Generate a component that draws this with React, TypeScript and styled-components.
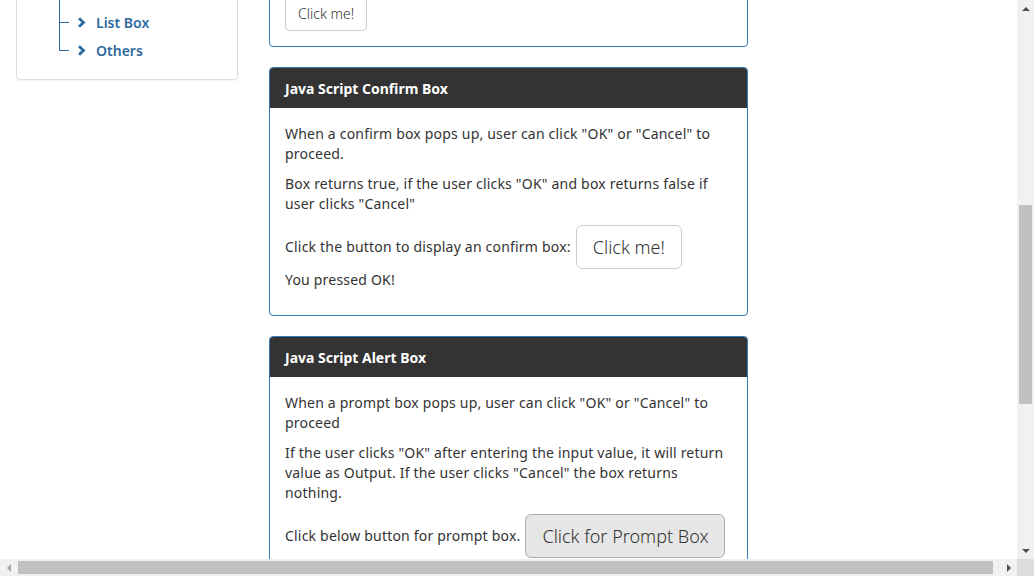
import styled, { createGlobalStyle } from "styled-components";

const GlobalStyle = createGlobalStyle`
  html, body {
    margin: 0;
    padding: 0;
    overflow: hidden;
  }
  body {
    font-family: "Noto Sans", "DejaVu Sans", sans-serif;
    font-size: 14px;
    color: #333;
    background: #fff;
  }
`;

const Frame = styled.div`
  width: 1034px;
  height: 576px;
  display: grid;
  grid-template-columns: 1017px 17px;
  grid-template-rows: 559px 17px;
`;

const Viewport = styled.div`
  overflow: hidden;
  background: #fff;
`;

/* page is scrolled: content starts above the visible area */
const Page = styled.div<{ scroll: number }>`
  margin-top: ${({ scroll }) => -scroll}px;
  display: flex;
  align-items: flex-start;
  padding-left: 16px;
  gap: 31px;
`;

const Sidebar = styled.div`
  width: 222px;
  box-sizing: border-box;
  border: 1px solid #ddd;
  border-radius: 4px;
  box-shadow: 0 1px 1px rgba(0, 0, 0, 0.05);
  padding: 26px 0 15px 42px;
`;

const Tree = styled.ul`
  list-style: none;
  margin: 0;
  padding: 0;
`;

const TreeItem = styled.li<{ first?: boolean; last?: boolean }>`
  position: relative;
  height: 28px;
  display: flex;
  align-items: center;
  padding-left: 18px;
  font-weight: 600;
  color: #2f6a9f;

  &::before {
    content: "";
    position: absolute;
    left: 0;
    top: ${({ first }) => (first ? "-30px" : "0")};
    height: ${({ first, last }) => (last ? 14 : 28) + (first ? 30 : 0)}px;
    border-left: 1px solid #2f6a9f;
  }
  &::after {
    content: "";
    position: absolute;
    left: 0;
    top: 14px;
    width: 10px;
    border-top: 1px solid #2f6a9f;
  }
`;

const Chevron = styled.svg`
  width: 9px;
  height: 11px;
  margin-right: 10px;
  flex-shrink: 0;
`;

const Main = styled.div`
  width: 479px;
  display: flex;
  flex-direction: column;
  gap: 20px;
`;

const Card = styled.div`
  border: 1px solid #337ab7;
  border-radius: 4px;
  overflow: hidden;
  background: #fff;
`;

const CardHeader = styled.div`
  background: #333;
  color: #fff;
  font-weight: 700;
  height: 40px;
  padding: 0 15px;
  display: flex;
  align-items: center;
`;

const CardBody = styled.div<{ top?: number }>`
  padding: ${({ top }) => top ?? 16}px 15px 15px;
  letter-spacing: 0.2px;
`;

const Para = styled.p`
  margin: 0 0 10px;
  line-height: 20px;
`;

const ButtonRow = styled.div`
  display: flex;
  align-items: center;
  gap: 5px;
  min-height: 46px;
  line-height: 20px;
`;

const Button = styled.button<{ size?: "sm" | "lg"; pressed?: boolean }>`
  font-family: inherit;
  font-weight: 300;
  color: #333;
  cursor: pointer;
  border: 1px solid ${({ pressed }) => (pressed ? "#adadad" : "#ccc")};
  background: ${({ pressed }) => (pressed ? "#e6e6e6" : "#fff")};
  border-radius: ${({ size }) => (size === "lg" ? "6px" : "4px")};
  font-size: ${({ size }) => (size === "lg" ? "18px" : "14px")};
  line-height: ${({ size }) => (size === "lg" ? "24px" : "20px")};
  padding: ${({ size }) => (size === "lg" ? "9px 16px" : "6px 12px")};
`;

const Result = styled.p`
  margin: 0 0 10px;
  line-height: 20px;
`;

/* browser scrollbars */
const VBar = styled.div`
  background: #f1f1f1;
  display: flex;
  flex-direction: column;
`;

const HBar = styled.div`
  background: #f1f1f1;
  display: flex;
  align-items: center;
`;

const Corner = styled.div`
  background: #dcdcdc;
`;

const ArrowBox = styled.div`
  width: 17px;
  height: 17px;
  flex-shrink: 0;
  display: flex;
  align-items: center;
  justify-content: center;
`;

const Arrow = styled.div<{ dir: "up" | "down" | "left" | "right" }>`
  width: 0;
  height: 0;
  border: 4px solid transparent;
  ${({ dir }) =>
    dir === "up"
      ? "border-bottom-color: #505050; border-top-width: 0;"
      : dir === "down"
      ? "border-top-color: #505050; border-bottom-width: 0;"
      : dir === "left"
      ? "border-right-color: #a3a3a3; border-left-width: 0;"
      : "border-left-color: #505050; border-right-width: 0;"}
`;

const VTrack = styled.div`
  flex: 1;
  display: flex;
  justify-content: center;
`;

const VThumb = styled.div<{ offset: number; size: number }>`
  width: 13px;
  margin-top: ${({ offset }) => offset}px;
  height: ${({ size }) => size}px;
  background: #c1c1c1;
`;

const HTrack = styled.div`
  flex: 1;
  height: 17px;
  display: flex;
  align-items: center;
`;

const HThumb = styled.div<{ offset: number; size: number }>`
  height: 13px;
  margin-left: ${({ offset }) => offset}px;
  width: ${({ size }) => size}px;
  background: #c1c1c1;
`;

const menu = ["List Box", "Others"];

const ChevronIcon = () => (
  <Chevron viewBox="0 0 9 11">
    <path d="M2 1.2 L6.5 5.5 L2 9.8" fill="none" stroke="#2f6a9f" strokeWidth="2.8" />
  </Chevron>
);

export default function App() {
  return (
    <>
      <GlobalStyle />
      <Frame>
        <Viewport>
          <Page scroll={19}>
            <Sidebar>
              <Tree>
                {menu.map((m, i) => (
                  <TreeItem key={m} first={i === 0} last={i === menu.length - 1}>
                    <ChevronIcon />
                    {m}
                  </TreeItem>
                ))}
              </Tree>
            </Sidebar>
            <Main>
              <Card>
                <CardBody top={15}>
                  <Button>Click me!</Button>
                </CardBody>
              </Card>
              <Card>
                <CardHeader>Java Script Confirm Box</CardHeader>
                <CardBody>
                  <Para>
                    When a confirm box pops up, user can click "OK" or "Cancel" to proceed.
                  </Para>
                  <Para>
                    Box returns true, if the user clicks "OK" and box returns false if user
                    clicks "Cancel"
                  </Para>
                  <ButtonRow>
                    Click the button to display an confirm box:
                    <Button size="lg">Click me!</Button>
                  </ButtonRow>
                  <Result>You pressed OK!</Result>
                </CardBody>
              </Card>
              <Card>
                <CardHeader>Java Script Alert Box</CardHeader>
                <CardBody>
                  <Para>
                    When a prompt box pops up, user can click "OK" or "Cancel" to proceed
                  </Para>
                  <Para>
                    If the user clicks "OK" after entering the input value, it will return
                    value as Output. If the user clicks "Cancel" the box returns nothing.
                  </Para>
                  <ButtonRow>
                    Click below button for prompt box.
                    <Button size="lg" pressed>
                      Click for Prompt Box
                    </Button>
                  </ButtonRow>
                  <Result>&nbsp;</Result>
                </CardBody>
              </Card>
            </Main>
          </Page>
        </Viewport>
        <VBar>
          <ArrowBox>
            <Arrow dir="up" />
          </ArrowBox>
          <VTrack>
            <VThumb offset={188} size={199} />
          </VTrack>
          <ArrowBox>
            <Arrow dir="down" />
          </ArrowBox>
        </VBar>
        <HBar>
          <ArrowBox>
            <Arrow dir="left" />
          </ArrowBox>
          <HTrack>
            <HThumb offset={1} size={975} />
          </HTrack>
          <ArrowBox>
            <Arrow dir="right" />
          </ArrowBox>
        </HBar>
        <Corner />
      </Frame>
    </>
  );
}
